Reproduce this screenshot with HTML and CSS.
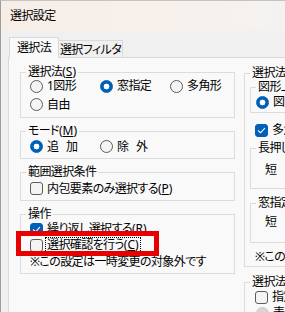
FILE: index.html
```html
<!DOCTYPE html>
<html lang="ja">
<head>
<meta charset="utf-8">
<title>選択設定</title>
<link rel="stylesheet" href="styles.css">
</head>
<body>
<div class="win">
  <div class="titlebar">選択設定</div>
  <div class="tabs">
    <div class="tab active">選択法</div>
    <div class="tab">選択フィルタ</div>
  </div>
  <div class="panel">
    <div class="col-left">
      <fieldset class="grp g1">
        <legend>選択法<span class="acc">(<u>S</u>)</span></legend>
        <div class="gbody grid3">
          <div class="item"><span class="rb"></span>1図形</div>
          <div class="item"><span class="rb on"></span>窓指定</div>
          <div class="item"><span class="rb"></span>多角形</div>
          <div class="item"><span class="rb"></span>自由</div>
        </div>
      </fieldset>
      <fieldset class="grp g2">
        <legend>モード<span class="acc">(<u>M</u>)</span></legend>
        <div class="gbody grid2">
          <div class="item"><span class="rb on"></span><span class="spaced">追 加</span></div>
          <div class="item"><span class="rb"></span><span class="spaced">除 外</span></div>
        </div>
      </fieldset>
      <fieldset class="grp g3">
        <legend>範囲選択条件</legend>
        <div class="gbody">
          <div class="item r19"><span class="cb"></span><span>内包要素のみ選択する<span class="acc">(<u>P</u>)</span></span></div>
        </div>
      </fieldset>
      <fieldset class="grp g4">
        <legend>操作</legend>
        <div class="gbody">
          <div class="item r16"><span class="cb on"><svg viewBox="0 0 13 13" width="11" height="11"><path d="M2.8 6.8 L5.3 9.2 L10.2 3.9" fill="none" stroke="#fff" stroke-width="1.3" stroke-linecap="round" stroke-linejoin="round"/></svg></span><span>繰り返し選択する<span class="acc">(<u>R</u>)</span></span></div>
          <div class="item r16 marked"><span class="cb"></span><span class="focus">選択確認を行う<span class="acc">(<u>C</u>)</span></span><span class="mark"></span></div>
          <div class="item r17">※この設定は一時変更の対象外です</div>
        </div>
      </fieldset>
    </div>
    <div class="col-right">
      <fieldset class="grp r1">
        <legend>選択法の詳細設定</legend>
        <div class="rbody">
          <fieldset class="grp sub shape">
            <legend>図形上の点の扱い</legend>
            <div class="gbody pad5">
              <div class="item r16"><span class="rb on"></span>図形上を含む</div>
            </div>
          </fieldset>
          <div class="item r16 ind cbrow"><span class="cb on"><svg viewBox="0 0 13 13" width="11" height="11"><path d="M2.8 6.8 L5.3 9.2 L10.2 3.9" fill="none" stroke="#fff" stroke-width="1.3" stroke-linecap="round" stroke-linejoin="round"/></svg></span>多角形を自動で閉じる</div>
          <fieldset class="grp sub press">
            <legend>長押し時間</legend>
            <div class="gbody slide1">
              <div class="item r16">短</div>
            </div>
          </fieldset>
          <fieldset class="grp sub wintime">
            <legend>窓指定切替時間</legend>
            <div class="gbody slide2">
              <div class="item r16">短</div>
            </div>
          </fieldset>
          <div class="item r14 ind note">※この設定は一時変更の対象外です</div>
        </div>
      </fieldset>
      <fieldset class="grp r2">
        <legend>選択法の補助</legend>
        <div class="rbody">
          <div class="item r16 ind"><span class="cb"></span>指定範囲を表示する</div>
          <div class="item r16 ind1"><span class="rb off"></span>表示</div>
        </div>
      </fieldset>
    </div>
  </div>
</div>
</body>
</html>
```
FILE: styles.css
```css
* { box-sizing: border-box; }
html, body { margin: 0; padding: 0; }
body {
  width: 285px;
  height: 312px;
  overflow: hidden;
  background: #f0f0f0;
  font-family: "Noto Sans", "Noto Sans CJK JP", sans-serif;
  font-size: 12px;
  line-height: 14px;
  letter-spacing: -0.6px;
  color: #000;
  font-feature-settings: "palt";
}
u { text-decoration-thickness: 1px; text-underline-offset: 1px; }
.acc {
  font-family: "Noto Sans", sans-serif;
  letter-spacing: 0;
  font-feature-settings: normal;
}

.win {
  height: 312px;
  border-left: 1px solid #9d9d9d;
  border-top: 1px solid #c4c4c4;
  background: #f0f0f0;
}
.titlebar {
  height: 30px;
  line-height: 29px;
  padding-left: 9px;
  background: linear-gradient(90deg, #f7eee8 0%, #f7f0eb 55%, #f4f2f1 100%);
}

.tabs {
  display: flex;
  align-items: flex-end;
  height: 20px;
  margin-top: 6px;
  padding-left: 8px;
  position: relative;
  z-index: 1;
}
.tab {
  height: 17px;
  padding: 2px 0 0;
  line-height: 14px;
  width: 64px;
  white-space: nowrap;
  text-align: center;
  border: 1px solid #d9d9d9;
  border-left: none;
  border-bottom: none;
  background: #f0f0f0;
}
.tab.active {
  height: 21px;
  width: 50px;
  margin-bottom: -1px;
  padding-top: 3px;
  border-left: 1px solid #d9d9d9;
  background: #f9f9f9;
}

.panel {
  display: flex;
  gap: 9px;
  width: 330px;
  height: 300px;
  margin-left: 7px;
  padding: 7px 0 0 11px;
  border: 1px solid #d9d9d9;
  background: #f9f9f9;
}
.col-left {
  width: 215px;
  flex: none;
  display: flex;
  flex-direction: column;
  gap: 6px;
}
.col-right {
  width: 160px;
  flex: none;
  margin-top: 1px;
}

.grp {
  margin: 0;
  padding: 0;
  min-width: 0;
  border: 1px solid #dcdcdc;
}
.grp legend {
  margin-left: 5px;
  padding: 0 2px;
  line-height: 14px;
  white-space: nowrap;
}
.gbody { padding: 0 0 2px 9px; }

.item {
  display: flex;
  align-items: center;
  gap: 4px;
  white-space: nowrap;
}
.spaced { white-space: pre; word-spacing: 5px; }
.r14 { height: 14px; }
.r16 { height: 16px; }
.r17 { height: 17px; }
.r19 { height: 19px; }

.grid3 {
  display: grid;
  grid-template-columns: 70px 70px auto;
  grid-template-rows: 18px 19px;
  margin-top: -2px;
  padding-bottom: 3px;
}
.grid2 {
  display: grid;
  grid-template-columns: 70px auto;
  grid-auto-rows: 17px;
  padding-bottom: 3px;
}
.g4 .gbody { padding-bottom: 3px; }

.rb {
  width: 13px;
  height: 13px;
  flex: none;
  border-radius: 50%;
  border: 1px solid #5c5c5c;
  background: #f4f4f4;
}
.rb.on {
  border-color: #005fb8;
  background: radial-gradient(circle, #ffffff 0 2.6px, #005fb8 3.2px);
}
.rb.off {
  border-color: #c8c8c8;
  background: #d6d6d6;
}
.cb {
  width: 13px;
  height: 13px;
  flex: none;
  border-radius: 3px;
  border: 1px solid #5c5c5c;
  background: #f4f4f4;
  display: flex;
  align-items: center;
  justify-content: center;
}
.cb.on {
  border-color: #005fb8;
  background: #005fb8;
}
.focus {
  outline: 1px dotted #000;
  outline-offset: 0;
  padding: 0 1px;
  margin-left: -1px;
}
.marked { position: relative; }
.mark {
  position: absolute;
  left: -14px;
  top: -6px;
  width: 143px;
  height: 25px;
  border: 5px solid #e60000;
}

/* right column */
.r1, .r2 { width: 160px; }
.r2 { margin-top: 8px; }
.rbody { padding: 0 0 2px 0; }
.sub { margin-left: 5px; }
.pad5 { padding-left: 5px; }
.ind { padding-left: 10px; }
.ind1 { padding-left: 11px; }
.cbrow { margin-top: 9px; }
.press { margin-top: 3px; }
.slide1 { padding: 7px 0 10px 14px; }
.wintime { margin-top: 7px; }
.slide2 { padding: 4px 0 12px 14px; }
.note { margin-top: 7px; }
```
